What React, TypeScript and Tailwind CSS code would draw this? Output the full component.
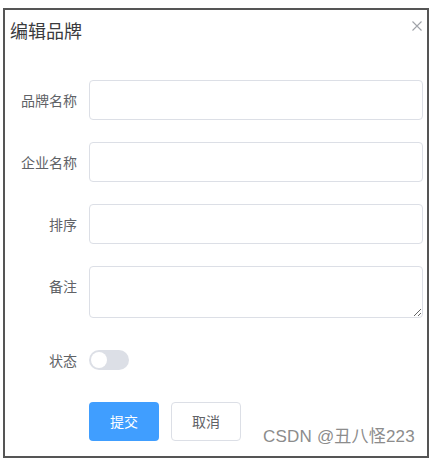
import { useState } from 'react';

const cjk = { fontFamily: '"Noto Sans CJK SC", "Noto Sans", sans-serif' };

function FormRow({ label, children, top = false }: { label: string; children: React.ReactNode; top?: boolean }) {
  return (
    <div className={`flex mb-[22px] ${top ? 'items-start' : 'items-center'}`}>
      <label className="w-[80px] shrink-0 pr-[12px] text-right text-[14px] leading-[40px] text-[#606266]">
        {label}
      </label>
      <div className="flex-1 flex items-center min-h-[40px]">{children}</div>
    </div>
  );
}

export default function App() {
  const [on, setOn] = useState(false);

  return (
    <div className="relative min-h-screen bg-white pt-[8px] pl-[3px]" style={cjk}>
      <div className="w-[426px] h-[450px] border-2 border-[#555555] bg-white">
        {/* header */}
        <div className="flex items-start justify-between px-[5px] pt-[8px]">
          <span className="text-[18px] leading-[24px] text-[#3a3b3e]">编辑品牌</span>
          <svg className="mt-[3px]" width="10" height="10" viewBox="0 0 10 10">
            <path d="M0.5 0.5 L9.5 9.5 M9.5 0.5 L0.5 9.5" stroke="#a0a3a9" strokeWidth="1.1" fill="none" />
          </svg>
        </div>

        {/* body */}
        <div className="pt-[38px] px-[4px]">
          <FormRow label="品牌名称">
            <input className="w-full h-[40px] rounded-[4px] border border-[#dcdfe6] px-[15px] text-[14px] outline-none" />
          </FormRow>
          <FormRow label="企业名称">
            <input className="w-full h-[40px] rounded-[4px] border border-[#dcdfe6] px-[15px] text-[14px] outline-none" />
          </FormRow>
          <FormRow label="排序">
            <input className="w-full h-[40px] rounded-[4px] border border-[#dcdfe6] px-[15px] text-[14px] outline-none" />
          </FormRow>
          <FormRow label="备注" top>
            <textarea className="w-full h-[52px] rounded-[4px] border border-[#dcdfe6] px-[15px] py-[5px] text-[14px] outline-none resize-y block" />
          </FormRow>
          <FormRow label="状态">
            <button
              onClick={() => setOn(!on)}
              className={`relative w-[40px] h-[20px] rounded-full ${on ? 'bg-[#409eff]' : 'bg-[#dcdfe6]'}`}
            >
              <span
                className={`absolute top-[2px] w-[16px] h-[16px] rounded-full bg-white ${on ? 'left-[22px]' : 'left-[2px]'}`}
              />
            </button>
          </FormRow>
          <div className="flex gap-[12px] pl-[80px]">
            <button className="w-[70px] h-[39px] rounded-[4px] bg-[#409eff] text-white text-[14px]">提交</button>
            <button className="w-[70px] h-[39px] rounded-[4px] border border-[#dcdfe6] bg-white text-[#606266] text-[14px]">
              取消
            </button>
          </div>
        </div>
      </div>

      {/* watermark */}
      <span
        className="absolute left-[263px] top-[427px] text-[17px] leading-[20px] text-[#8c8c8c] whitespace-nowrap tracking-[0.2px]"
        style={{ fontFamily: '"Liberation Sans", "Noto Sans CJK SC", sans-serif' }}
      >
        CSDN @丑八怪223
      </span>
    </div>
  );
}
